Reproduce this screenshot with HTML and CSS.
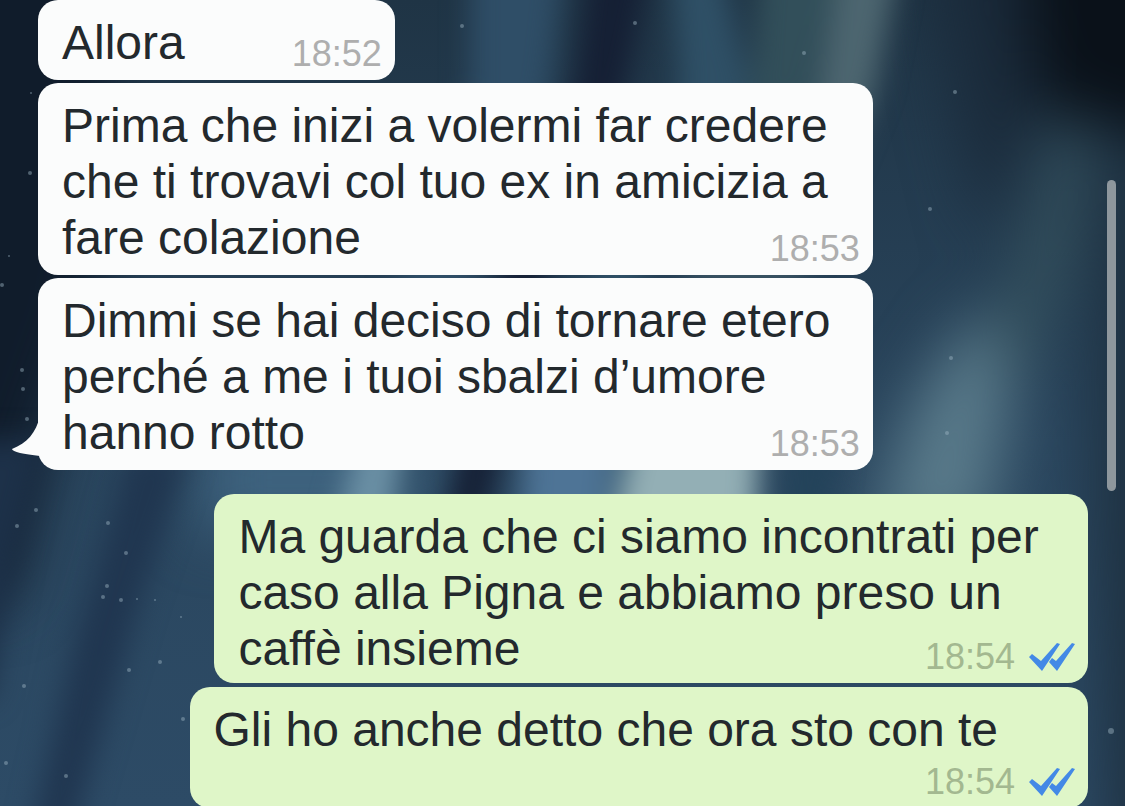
FILE: index.html
```
<!DOCTYPE html>
<html lang="it">
<head>
  <meta charset="UTF-8">
  <meta name="viewport" content="width=device-width, initial-scale=1.0">
  <title>Chat</title>
  <link rel="stylesheet" href="styles.css">
</head>
<body>
  <!-- Wallpaper: night sky with soft light streaks -->
  <svg class="wallpaper" viewBox="0 0 1125 806" preserveAspectRatio="none" aria-hidden="true">
    <defs>
      <linearGradient id="sky" x1="0" y1="0" x2="0" y2="1">
        <stop offset="0" stop-color="#1f3445"/>
        <stop offset="0.55" stop-color="#2a465e"/>
        <stop offset="1" stop-color="#2d4b66"/>
      </linearGradient>
      <filter id="soft" x="-50%" y="-50%" width="200%" height="200%" color-interpolation-filters="sRGB">
        <feGaussianBlur stdDeviation="14"/>
      </filter>
      <filter id="wide" x="-50%" y="-50%" width="200%" height="200%" color-interpolation-filters="sRGB">
        <feGaussianBlur stdDeviation="30"/>
      </filter>
    </defs>
    <rect width="1125" height="806" fill="url(#sky)"/>
    <g filter="url(#wide)">
      <path d="M-120 -120H120L100 300L50 440L10 600H-120Z" fill="#101c2b"/>
      <path d="M1010 -120H1260V180L1130 130L1040 110Z" fill="#0a1119"/>
      <path d="M930 -60H1020L1030 130L990 240L960 120Z" fill="#1a2a3a"/>
      <path d="M1100 140H1260V920H1110L1095 500Z" fill="#1e3141"/>
      <path d="M870 540L910 410L970 320L1015 320L1010 400L985 540Z" fill="#597a8a"/>
      <path d="M990 360L1030 240L1065 110L1085 150L1065 260L1020 370Z" fill="#38555f"/>
      <path d="M200 430H420V530H200Z" fill="#3f6480"/>
    </g>
    <g filter="url(#soft)">
      <path d="M470 -40H565L550 90L475 275L410 520H335L400 275L470 90Z" fill="#2f4e67"/>
      <path d="M360 430H405L393 530H335Z" fill="#6b90a5"/>
      <path d="M592 -40H650L625 90L545 275L485 520H445L500 275L575 90Z" fill="#151f34"/>
      <path d="M670 -40H720L750 90L640 275L620 520H530L590 275L680 90Z" fill="#2f5066"/>
      <path d="M525 430H615L605 530H520Z" fill="#4e7496"/>
      <path d="M760 -40H840L810 110H750Z" fill="#324f5a"/>
      <path d="M840 -40H900L875 90L800 275H680L815 110Z" fill="#4d6670"/>
      <path d="M635 420H760L755 540H610Z" fill="#93afb5"/>
      <path d="M790 420H840L825 540H785Z" fill="#23435a"/>
      <path d="M130 450H190L140 600L70 840H30L75 640Z" fill="#203650"/>
      <path d="M-40 440H45L15 560L-10 700H-40Z" fill="#1d3149"/>
    </g>
    <g fill="#9fb6c4" opacity="0.45">
      <circle cx="31" cy="93" r="1"/>
      <circle cx="30" cy="173" r="2"/>
      <circle cx="9" cy="256" r="1"/>
      <circle cx="2" cy="285" r="2"/>
      <circle cx="22" cy="370" r="2"/>
      <circle cx="23" cy="389" r="2"/>
      <circle cx="27" cy="419" r="2"/>
      <circle cx="17" cy="526" r="2"/>
      <circle cx="36" cy="510" r="2"/>
      <circle cx="108" cy="523" r="2"/>
      <circle cx="126" cy="553" r="2"/>
      <circle cx="103" cy="597" r="2"/>
      <circle cx="107" cy="586" r="2"/>
      <circle cx="121" cy="600" r="2"/>
      <circle cx="137" cy="599" r="1"/>
      <circle cx="155" cy="600" r="1"/>
      <circle cx="181" cy="617" r="1"/>
      <circle cx="129" cy="670" r="2"/>
      <circle cx="160" cy="662" r="2"/>
      <circle cx="24" cy="686" r="2"/>
      <circle cx="183" cy="719" r="2"/>
      <circle cx="6" cy="763" r="2"/>
      <circle cx="66" cy="776" r="2"/>
      <circle cx="462" cy="26" r="2"/>
      <circle cx="635" cy="23" r="2"/>
      <circle cx="804" cy="53" r="2"/>
      <circle cx="955" cy="92" r="2"/>
      <circle cx="930" cy="209" r="2"/>
      <circle cx="951" cy="358" r="2"/>
      <circle cx="947" cy="433" r="2"/>
      <circle cx="1111" cy="731" r="3"/>
    </g>
    <symbol id="read" viewBox="0 0 46 28">
      <path d="M0 14L3 11L12 18L28 0L31 1L13 28Z"/>
      <path d="M20 19L23 15L27 18L43 0L46 1L28 28Z"/>
    </symbol>
  </svg>

  <main class="chat">
    <article class="bubble incoming short">
      <p>Allora</p>
      <footer><time>18:52</time></footer>
    </article>
    <article class="bubble incoming">
      <p>Prima che inizi a volermi far credere che ti trovavi col tuo ex in amicizia a fare colazione</p>
      <footer><time>18:53</time></footer>
    </article>
    <article class="bubble incoming last">
      <p>Dimmi se hai deciso di tornare etero perché a me i tuoi sbalzi d’umore hanno rotto</p>
      <footer><time>18:53</time></footer>
      <svg class="tail" viewBox="0 0 28 44" aria-hidden="true">
        <path d="M28 0C24 17 15 27 0 33C0 36 12 38 28 40Z"/>
      </svg>
    </article>
    <article class="bubble outgoing">
      <p>Ma guarda che ci siamo incontrati per caso alla Pigna e abbiamo preso un caffè insieme</p>
      <footer>
        <time>18:54</time>
        <svg class="ticks" role="img" aria-label="Letto"><use href="#read"/></svg>
      </footer>
    </article>
    <article class="bubble outgoing stacked">
      <p>Gli ho anche detto che ora sto con te</p>
      <footer>
        <time>18:54</time>
        <svg class="ticks" role="img" aria-label="Letto"><use href="#read"/></svg>
      </footer>
    </article>
  </main>

  <div class="scroll-thumb"></div>
</body>
</html>
```
FILE: styles.css
```
* {
  margin: 0;
  padding: 0;
  box-sizing: border-box;
}

body {
  min-height: 100vh;
  overflow: hidden;
  background: #22384c;
  font-family: "Liberation Sans", Helvetica, Arial, sans-serif;
  color: #23292d;
}

.wallpaper {
  position: fixed;
  inset: 0;
  width: 100%;
  height: 100%;
}

/* Messages */
.chat {
  position: relative;
  display: flex;
  flex-direction: column;
  gap: 3px;
  height: 100vh;
  padding: 0 37px 0 38px;
}

.bubble {
  display: grid;
  flex: none;
  padding: 15px 13px 9px 24px;
  border-radius: 20px;
}

.bubble p {
  grid-area: 1 / 1;
  padding-right: 24px;
  font-size: 48px;
  line-height: 56px;
}

/* The time shares the last line of the text */
.bubble footer {
  grid-area: 1 / 1;
  place-self: end;
  display: flex;
  align-items: center;
  gap: 14px;
  margin-bottom: -1px;
  font-size: 36px;
  line-height: 36px;
  color: #aeaeae;
}

.incoming {
  position: relative;
  align-self: flex-start;
  max-width: 79.5%;
  background: #fbfcfc;
}

.outgoing {
  align-self: flex-end;
  max-width: 83.2%;
  padding-bottom: 6px;
  background: #dff6c8;
}

.outgoing footer {
  margin-bottom: 2px;
  color: #a3b890;
}

.short {
  column-gap: 83px;
}

.short footer {
  grid-area: 1 / 2;
}

.last {
  margin-bottom: 21px;
}

.stacked {
  max-width: 90%;
  margin-top: 1px;
}

.stacked p {
  padding-right: 77px;
}

.stacked footer {
  grid-area: 2 / 1;
  margin-top: 6px;
}

.tail {
  position: absolute;
  left: -26px;
  bottom: 10px;
  width: 28px;
  height: 44px;
  fill: #fbfcfc;
}

.ticks {
  width: 46px;
  height: 28px;
  fill: #4389e6;
}

.scroll-thumb {
  position: fixed;
  top: 180px;
  right: 9px;
  width: 9px;
  height: 311px;
  border-radius: 5px;
  background: #8e979d;
}
```
